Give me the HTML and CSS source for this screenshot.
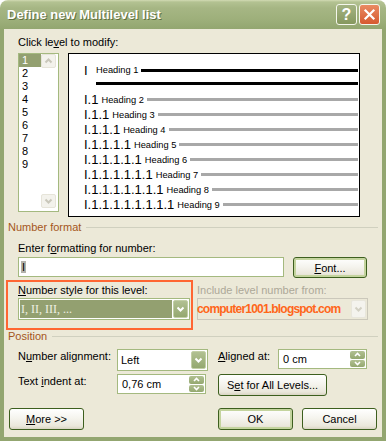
FILE: index.html
```html
<!DOCTYPE html>
<html lang="en">
<head>
    <meta charset="UTF-8">
    <title>Define new Multilevel list</title>
    <link rel="stylesheet" href="styles.css">
</head>
<body>
<div class="window">
    <div class="titlebar">
        <span class="title">Define new Multilevel list</span>
        <div class="caption">
            <span class="cap help">?</span>
            <span class="cap close"><svg width="13" height="13" viewBox="0 0 13 13"><path d="M2.5 2.5L10.5 10.5M10.5 2.5L2.5 10.5" stroke="#fff" stroke-width="2.2" stroke-linecap="square"/></svg></span>
        </div>
    </div>
    <div class="dialog">
        <div class="label top">Click le<u>v</u>el to modify:</div>
        <div class="levels">
            <div class="listbox">
                <ul class="items">
                    <li class="current">1</li>
                    <li>2</li>
                    <li>3</li>
                    <li>4</li>
                    <li>5</li>
                    <li>6</li>
                    <li>7</li>
                    <li>8</li>
                    <li>9</li>
                </ul>
                <div class="scroll">
                    <span class="sbtn"><svg width="13" height="12" viewBox="0 0 13 12"><polyline points="3.5,7.5 6.5,4.5 9.5,7.5" fill="none" stroke="#C9C7BA" stroke-width="2"/></svg></span>
                    <span class="sbtn"><svg width="13" height="12" viewBox="0 0 13 12"><polyline points="3.5,4.5 6.5,7.5 9.5,4.5" fill="none" stroke="#C9C7BA" stroke-width="2"/></svg></span>
                </div>
            </div>
            <div class="preview">
                <div class="prow first"><span class="num">I</span><span class="head">Heading 1</span><span class="bar black"></span></div>
                <div class="prow rule"><span class="bar black"></span></div>
                <div class="prow"><span class="num">I.1</span><span class="head">Heading 2</span><span class="bar"></span></div>
                <div class="prow"><span class="num">I.1.1</span><span class="head">Heading 3</span><span class="bar"></span></div>
                <div class="prow"><span class="num">I.1.1.1</span><span class="head">Heading 4</span><span class="bar"></span></div>
                <div class="prow"><span class="num">I.1.1.1.1</span><span class="head">Heading 5</span><span class="bar"></span></div>
                <div class="prow"><span class="num">I.1.1.1.1.1</span><span class="head">Heading 6</span><span class="bar"></span></div>
                <div class="prow"><span class="num">I.1.1.1.1.1.1</span><span class="head">Heading 7</span><span class="bar"></span></div>
                <div class="prow"><span class="num">I.1.1.1.1.1.1.1</span><span class="head">Heading 8</span><span class="bar"></span></div>
                <div class="prow"><span class="num">I.1.1.1.1.1.1.1.1</span><span class="head">Heading 9</span><span class="bar"></span></div>
            </div>
        </div>

        <div class="group"><span>Number format</span><i></i></div>
        <div class="label sub">Enter f<u>o</u>rmatting for number:</div>
        <div class="row fmt">
            <div class="textbox"><span class="caret">I</span></div>
            <button class="btn default font-btn"><u>F</u>ont...</button>
        </div>
        <div class="style-row">
            <div class="col">
                <div class="label"><u>N</u>umber style for this level:</div>
                <div class="combo sel">
                    <span class="value">I, II, III, ...</span>
                    <span class="drop"><svg width="13" height="16" viewBox="0 0 13 16"><polyline points="3.5,6.5 6.5,9.5 9.5,6.5" fill="none" stroke="#fff" stroke-width="2"/></svg></span>
                </div>
            </div>
            <div class="col right-col">
                <div class="label disabled">Include level number from:</div>
                <div class="combo off">
                    <span class="mark">computer1001.blogspot.com</span>
                    <span class="drop"><svg width="13" height="16" viewBox="0 0 13 16"><polyline points="3.5,6.5 6.5,9.5 9.5,6.5" fill="none" stroke="#D2D0C4" stroke-width="2"/></svg></span>
                </div>
            </div>
            <div class="callout"></div>
        </div>

        <div class="group pos"><span>Position</span><i></i></div>
        <div class="row pos-row first-pos">
            <div class="label lbl-a">N<u>u</u>mber alignment:</div>
            <div class="combo align">
                <span class="value">Left</span>
                <span class="drop"><svg width="13" height="16" viewBox="0 0 13 16"><polyline points="3.5,6.5 6.5,9.5 9.5,6.5" fill="none" stroke="#fff" stroke-width="2"/></svg></span>
            </div>
            <div class="label lbl-b"><u>A</u>ligned at:</div>
            <div class="spin">
                <span class="value">0 cm</span>
                <span class="spinbtns">
                    <span><svg width="13" height="7" viewBox="0 0 13 7"><polyline points="4,5 6.5,2.5 9,5" fill="none" stroke="#fff" stroke-width="1.6"/></svg></span>
                    <span><svg width="13" height="7" viewBox="0 0 13 7"><polyline points="4,2 6.5,4.5 9,2" fill="none" stroke="#fff" stroke-width="1.6"/></svg></span>
                </span>
            </div>
        </div>
        <div class="row pos-row">
            <div class="label lbl-a">Text <u>i</u>ndent at:</div>
            <div class="spin">
                <span class="value">0,76 cm</span>
                <span class="spinbtns">
                    <span><svg width="13" height="7" viewBox="0 0 13 7"><polyline points="4,5 6.5,2.5 9,5" fill="none" stroke="#fff" stroke-width="1.6"/></svg></span>
                    <span><svg width="13" height="7" viewBox="0 0 13 7"><polyline points="4,2 6.5,4.5 9,2" fill="none" stroke="#fff" stroke-width="1.6"/></svg></span>
                </span>
            </div>
            <button class="btn all-btn">S<u>e</u>t for All Levels...</button>
        </div>

        <div class="buttons">
            <button class="btn"><u>M</u>ore &gt;&gt;</button>
            <div class="right">
                <button class="btn default">OK</button>
                <button class="btn">Cancel</button>
            </div>
        </div>
    </div>
</div>
</body>
</html>
```

FILE: styles.css
```css
*{
    margin: 0;
    padding: 0;
    box-sizing: border-box;
}
body{
    background: #fff;
    font-family: "Liberation Sans", Arial, sans-serif;
    font-size: 11px;
    color: #000;
}
.window{
    width: 386px;
    height: 441px;
    display: flex;
    flex-direction: column;
    padding: 0 4px 4px 4px;
    border-radius: 8px 8px 0 0;
    background: linear-gradient(to bottom, #D2DBB4 0, #B3C292 2px, #A6B684 8px, #9DAF7A 20px, #93A670 29px, #93A670 100%);
}
/* title bar */
.titlebar{
    height: 29px;
    display: flex;
    align-items: center;
    justify-content: space-between;
    padding: 0 2px 0 3px;
}
.title{
    color: #fff;
    font-weight: bold;
    font-size: 13px;
    text-shadow: 1px 1px 0 #5F6F3F;
}
.caption{
    display: flex;
    gap: 2px;
}
.cap{
    width: 21px;
    height: 21px;
    border: 1px solid #F4F6EC;
    border-radius: 3px;
    display: flex;
    align-items: center;
    justify-content: center;
    color: #fff;
}
.help{
    background: linear-gradient(to bottom, #A4B383, #86985E);
    font-weight: bold;
    font-size: 16px;
}
.close{
    background: linear-gradient(to bottom, #E98A62, #D65A30);
}
/* dialog body */
.dialog{
    flex: 1;
    background: #ECE9D8;
    display: flex;
    flex-direction: column;
}
.label{
    line-height: 13px;
    white-space: nowrap;
}
.label.top{
    margin: 7px 0 0 14px;
}
.label.disabled{
    color: #ACA899;
}
.levels{
    display: flex;
    align-items: flex-start;
    margin: 4px 0 0 14px;
}
.listbox{
    width: 41px;
    height: 159px;
    border: 1px solid #A4B97F;
    background: #fff;
    display: flex;
}
.items{
    list-style: none;
    width: 22px;
}
.items li{
    height: 13px;
    line-height: 13px;
    padding-left: 3px;
}
.items li.current{
    background: #93A070;
    color: #fff;
}
.scroll{
    width: 17px;
    display: flex;
    flex-direction: column;
    justify-content: space-between;
    padding: 0 1px 3px 0;
}
.sbtn{
    display: flex;
    width: 15px;
    height: 14px;
    border: 1px solid #E6E4D9;
    border-radius: 2px;
    background: #F3F2EC;
}
.preview{
    width: 292px;
    height: 164px;
    margin-left: 9px;
    border: 1px solid #000;
    background: #fff;
    padding: 8px 1px 0 15px;
}
.prow{
    display: flex;
    align-items: center;
    height: 15px;
    white-space: nowrap;
}
.prow.first{
    height: 16px;
}
.prow.rule{
    height: 14px;
    align-items: flex-start;
    padding: 4px 0 0 12px;
}
.num{
    font-size: 13px;
}
.first .num{
    width: 12px;
}
.head{
    font-size: 9.3px;
    margin-left: 3px;
}
.first .head{
    margin-left: 0;
}
.bar{
    flex: 1;
    height: 3px;
    margin-left: 3px;
    background: #A8A8A8;
}
.bar.black{
    background: #000;
}
.rule .bar{
    margin-left: 0;
}
/* group headers */
.group{
    display: flex;
    align-items: center;
    margin: 4px 4px 0 4px;
    line-height: 12px;
    color: #A4561B;
}
.group i{
    flex: 1;
    height: 1px;
    margin-left: 5px;
    background: #D0D0BF;
}
.group.pos{
    margin-top: 10px;
}
.label.sub{
    margin: 9px 0 0 14px;
}
.row{
    display: flex;
    align-items: flex-start;
    margin-left: 14px;
}
.fmt{
    margin-top: 2px;
}
.textbox{
    width: 266px;
    height: 20px;
    border: 1px solid #A4B97F;
    background: #fff;
    padding: 2px 2px;
    line-height: 14px;
}
.caret{
    background: #B3B2AA;
    padding: 0 1px;
}
/* buttons */
.btn{
    font: 11px "Liberation Sans", Arial, sans-serif;
    color: #000;
    width: 75px;
    height: 22px;
    border: 1px solid #3D5F1E;
    border-radius: 3px;
    background: linear-gradient(to bottom, #FFFFFF 0%, #F5F4EE 45%, #EAE7DB 85%, #D9D4C3 100%);
}
.btn.default{
    box-shadow: inset 0 0 0 2px #C4D49E;
}
.font-btn{
    width: 74px;
    height: 21px;
    margin-left: 9px;
}
/* style row with the red callout */
.style-row{
    position: relative;
    display: flex;
    margin-top: 6px;
    padding-left: 14px;
}
.col{
    width: 172px;
}
.right-col{
    width: 171px;
    margin-left: 7px;
}
.combo{
    display: flex;
    height: 22px;
    margin-top: 1px;
    padding: 1px;
    border: 1px solid #A4B97F;
    background: #fff;
}
.combo .value{
    flex: 1;
    line-height: 18px;
    padding-left: 1px;
    white-space: nowrap;
}
.combo.sel .value{
    margin: 0 1px 0 0;
    background: #93A070;
    color: #EEF0E2;
    font-family: "Liberation Serif", "Times New Roman", serif;
    font-size: 12px;
}
.drop{
    width: 15px;
    height: 18px;
    display: flex;
    align-items: center;
    justify-content: center;
    border-radius: 2px;
    border: 1px solid #C2CFA6;
    background: linear-gradient(to bottom, #B1C092, #94A86F);
}
.combo.off{
    border-color: #CBC8BB;
    background: #ECE9D8;
}
.combo.off .drop{
    border-color: #E8E6DC;
    background: #F4F3EE;
}
.mark{
    flex: 1;
    margin-left: -2px;
    line-height: 18px;
    color: #FF661A;
    font-weight: bold;
    font-size: 12px;
    letter-spacing: -0.8px;
    white-space: nowrap;
}
.callout{
    position: absolute;
    left: 2px;
    top: -4px;
    width: 187px;
    height: 50px;
    border: 2px solid #FF6633;
}
/* position section */
.pos-row{
    margin-top: 3px;
}
.first-pos{
    margin-top: 7px;
}
.lbl-a{
    width: 99px;
    padding-top: 1px;
}
.lbl-b{
    width: 60px;
    margin-left: 10px;
    padding-top: 1px;
}
.combo.align{
    width: 91px;
    margin-top: 0;
}
.combo.align .value{
    padding-left: 2px;
}
.spin{
    display: flex;
    width: 89px;
    height: 20px;
    padding: 1px;
    border: 1px solid #A4B97F;
    background: #fff;
}
.spin .value{
    flex: 1;
    line-height: 16px;
    padding-left: 3px;
}
.spinbtns{
    width: 15px;
    display: flex;
    flex-direction: column;
    gap: 1px;
}
.spinbtns span{
    flex: 1;
    display: flex;
    align-items: center;
    justify-content: center;
    border-radius: 2px;
    background: linear-gradient(to bottom, #B1C092, #94A86F);
}
.all-btn{
    width: 109px;
    margin-left: 12px;
}
.buttons{
    display: flex;
    justify-content: space-between;
    margin-top: 12px;
    padding: 0 5px;
}
.buttons .right{
    display: flex;
    gap: 9px;
}
```
